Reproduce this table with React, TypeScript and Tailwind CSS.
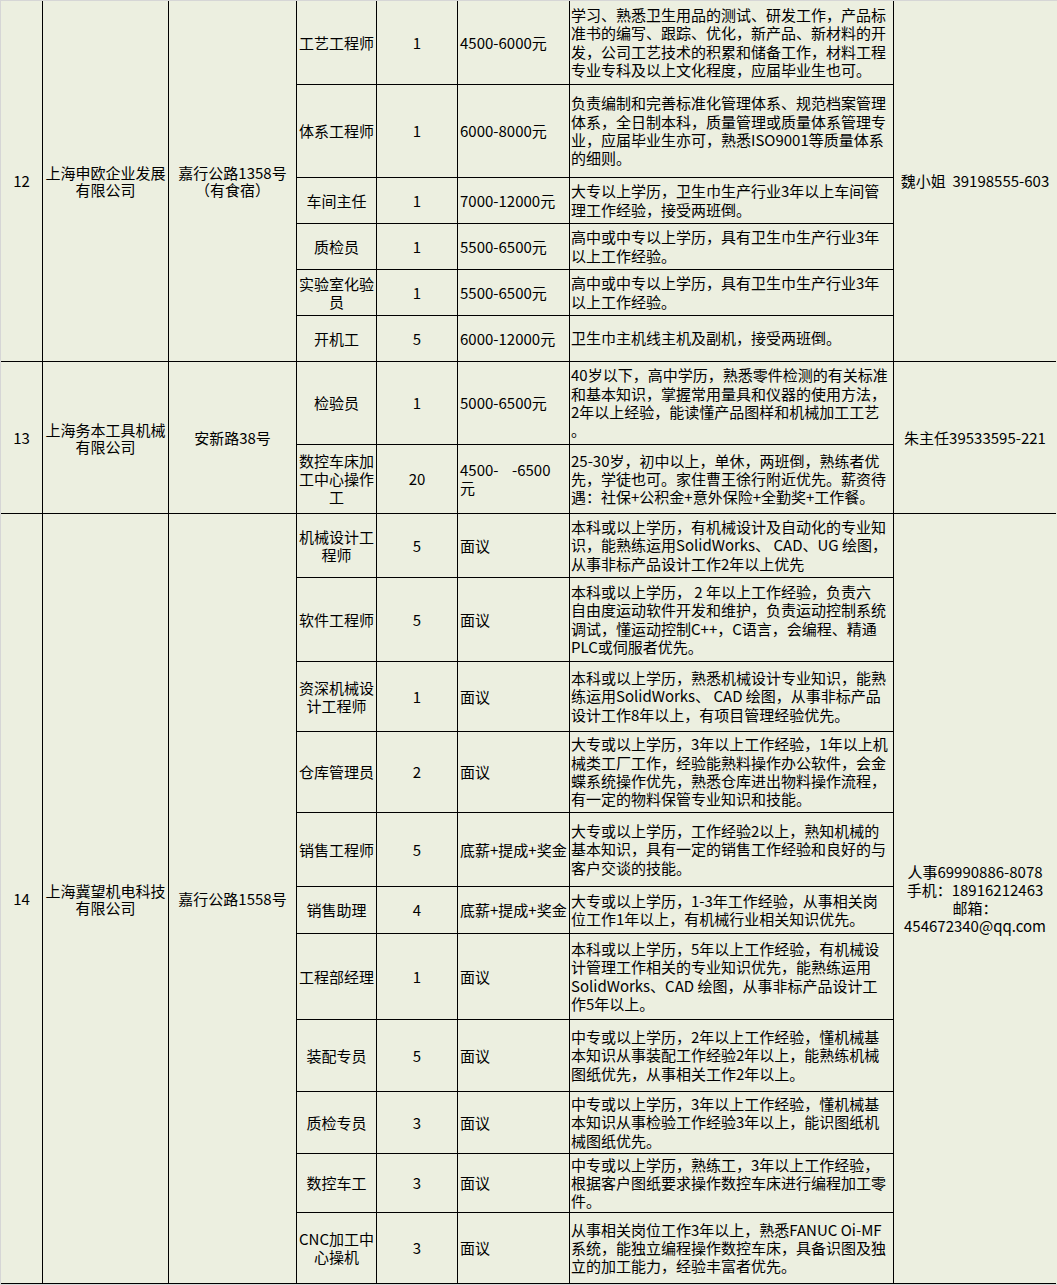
interface Job {
  title: string[];
  count: string;
  salary: string[];
  desc: string[];
}

interface Company {
  no: string;
  name: string[];
  address: string[];
  contact: string[];
  span: string;
  jobs: Job[];
}

const companies: Company[] = [
  {
    no: "12",
    name: ["上海申欧企业发展", "有限公司"],
    address: ["嘉行公路1358号", "（有食宿）"],
    contact: ["魏小姐  39198555-603"],
    span: "row-span-6",
    jobs: [
      {
        title: ["工艺工程师"],
        count: "1",
        salary: ["4500-6000元"],
        desc: [
          "学习、熟悉卫生用品的测试、研发工作，产品标",
          "准书的编写、跟踪、优化，新产品、新材料的开",
          "发，公司工艺技术的积累和储备工作，材料工程",
          "专业专科及以上文化程度，应届毕业生也可。",
        ],
      },
      {
        title: ["体系工程师"],
        count: "1",
        salary: ["6000-8000元"],
        desc: [
          "负责编制和完善标准化管理体系、规范档案管理",
          "体系，全日制本科，质量管理或质量体系管理专",
          "业，应届毕业生亦可，熟悉ISO9001等质量体系",
          "的细则。",
        ],
      },
      {
        title: ["车间主任"],
        count: "1",
        salary: ["7000-12000元"],
        desc: ["大专以上学历，卫生巾生产行业3年以上车间管", "理工作经验，接受两班倒。"],
      },
      {
        title: ["质检员"],
        count: "1",
        salary: ["5500-6500元"],
        desc: ["高中或中专以上学历，具有卫生巾生产行业3年", "以上工作经验。"],
      },
      {
        title: ["实验室化验", "员"],
        count: "1",
        salary: ["5500-6500元"],
        desc: ["高中或中专以上学历，具有卫生巾生产行业3年", "以上工作经验。"],
      },
      {
        title: ["开机工"],
        count: "5",
        salary: ["6000-12000元"],
        desc: ["卫生巾主机线主机及副机，接受两班倒。"],
      },
    ],
  },
  {
    no: "13",
    name: ["上海务本工具机械", "有限公司"],
    address: ["安新路38号"],
    contact: ["朱主任39533595-221"],
    span: "row-span-2",
    jobs: [
      {
        title: ["检验员"],
        count: "1",
        salary: ["5000-6500元"],
        desc: [
          "40岁以下，高中学历，熟悉零件检测的有关标准",
          "和基本知识，掌握常用量具和仪器的使用方法，",
          "2年以上经验，能读懂产品图样和机械加工工艺",
          "。",
        ],
      },
      {
        title: ["数控车床加", "工中心操作", "工"],
        count: "20",
        salary: ["4500-    -6500", "元"],
        desc: [
          "25-30岁，初中以上，单休，两班倒，熟练者优",
          "先，学徒也可。家住曹王徐行附近优先。薪资待",
          "遇：社保+公积金+意外保险+全勤奖+工作餐。",
        ],
      },
    ],
  },
  {
    no: "14",
    name: ["上海冀望机电科技", "有限公司"],
    address: ["嘉行公路1558号"],
    contact: ["人事69990886-8078", "手机：18916212463", "邮箱：", "454672340@qq.com"],
    span: "row-span-11",
    jobs: [
      {
        title: ["机械设计工", "程师"],
        count: "5",
        salary: ["面议"],
        desc: [
          "本科或以上学历，有机械设计及自动化的专业知",
          "识，能熟练运用SolidWorks、 CAD、UG 绘图，",
          "从事非标产品设计工作2年以上优先",
        ],
      },
      {
        title: ["软件工程师"],
        count: "5",
        salary: ["面议"],
        desc: [
          "本科或以上学历， 2 年以上工作经验，负责六",
          "自由度运动软件开发和维护，负责运动控制系统",
          "调试，懂运动控制C++，C语言，会编程、精通",
          "PLC或伺服者优先。",
        ],
      },
      {
        title: ["资深机械设", "计工程师"],
        count: "1",
        salary: ["面议"],
        desc: [
          "本科或以上学历，熟悉机械设计专业知识，能熟",
          "练运用SolidWorks、 CAD 绘图，从事非标产品",
          "设计工作8年以上，有项目管理经验优先。",
        ],
      },
      {
        title: ["仓库管理员"],
        count: "2",
        salary: ["面议"],
        desc: [
          "大专或以上学历，3年以上工作经验，1年以上机",
          "械类工厂工作，经验能熟料操作办公软件，会金",
          "蝶系统操作优先，熟悉仓库进出物料操作流程，",
          "有一定的物料保管专业知识和技能。",
        ],
      },
      {
        title: ["销售工程师"],
        count: "5",
        salary: ["底薪+提成+奖金"],
        desc: [
          "大专或以上学历，工作经验2以上，熟知机械的",
          "基本知识，具有一定的销售工作经验和良好的与",
          "客户交谈的技能。",
        ],
      },
      {
        title: ["销售助理"],
        count: "4",
        salary: ["底薪+提成+奖金"],
        desc: ["大专或以上学历，1-3年工作经验，从事相关岗", "位工作1年以上，有机械行业相关知识优先。"],
      },
      {
        title: ["工程部经理"],
        count: "1",
        salary: ["面议"],
        desc: [
          "本科或以上学历，5年以上工作经验，有机械设",
          "计管理工作相关的专业知识优先，能熟练运用",
          "SolidWorks、CAD 绘图，从事非标产品设计工",
          "作5年以上。",
        ],
      },
      {
        title: ["装配专员"],
        count: "5",
        salary: ["面议"],
        desc: [
          "中专或以上学历，2年以上工作经验，懂机械基",
          "本知识从事装配工作经验2年以上，能熟练机械",
          "图纸优先，从事相关工作2年以上。",
        ],
      },
      {
        title: ["质检专员"],
        count: "3",
        salary: ["面议"],
        desc: [
          "中专或以上学历，3年以上工作经验，懂机械基",
          "本知识从事检验工作经验3年以上，能识图纸机",
          "械图纸优先。",
        ],
      },
      {
        title: ["数控车工"],
        count: "3",
        salary: ["面议"],
        desc: [
          "中专或以上学历，熟练工，3年以上工作经验，",
          "根据客户图纸要求操作数控车床进行编程加工零",
          "件。",
        ],
      },
      {
        title: ["CNC加工中", "心操机"],
        count: "3",
        salary: ["面议"],
        desc: [
          "从事相关岗位工作3年以上，熟悉FANUC Oi-MF",
          "系统，能独立编程操作数控车床，具备识图及独",
          "立的加工能力，经验丰富者优先。",
        ],
      },
    ],
  },
];

const cell = "border-r border-b border-black flex flex-col justify-center overflow-hidden";

const Lines = ({ lines }: { lines: string[] }) => (
  <>
    {lines.map((l, i) => (
      <span key={i} className="block whitespace-pre">
        {l}
      </span>
    ))}
  </>
);

export default function App() {
  return (
    <div
      className="w-[1057px] h-[1285px] bg-[#d6d6d6] pt-px pl-px text-black"
      style={{ fontFamily: '"Noto Sans CJK SC", "Noto Sans", sans-serif' }}
    >
      <div className="grid bg-[#ecefe0] grid-cols-[42px_126px_128px_80px_81px_112px_324px_162px] grid-rows-[84px_93px_46px_46px_46px_46px_83px_69px_64px_84px_70px_81px_74px_47px_86px_72px_62px_59px_71px] text-[15px] leading-[18px]">
        {companies.map((c) =>
          c.jobs.map((j, idx) => (
            <>
              {idx === 0 && (
                <>
                  <div className={`${cell} ${c.span} items-center`}>{c.no}</div>
                  <div className={`${cell} ${c.span} items-center text-center leading-[17px]`}>
                    <Lines lines={c.name} />
                  </div>
                  <div className={`${cell} ${c.span} items-center text-center leading-[17px]`}>
                    <Lines lines={c.address} />
                  </div>
                </>
              )}
              <div className={`${cell} items-center text-center`}>
                <Lines lines={j.title} />
              </div>
              <div className={`${cell} items-center`}>{j.count}</div>
              <div className={`${cell} pl-[2px]`}>
                <Lines lines={j.salary} />
              </div>
              <div className={`${cell} pl-[1px] text-[15px] leading-[18.3px]`}>
                <Lines lines={j.desc} />
              </div>
              {idx === 0 && (
                <div className={`${c.span} border-b border-black flex flex-col justify-center items-center text-center`}>
                  <Lines lines={c.contact} />
                </div>
              )}
            </>
          ))
        )}
      </div>
    </div>
  );
}
